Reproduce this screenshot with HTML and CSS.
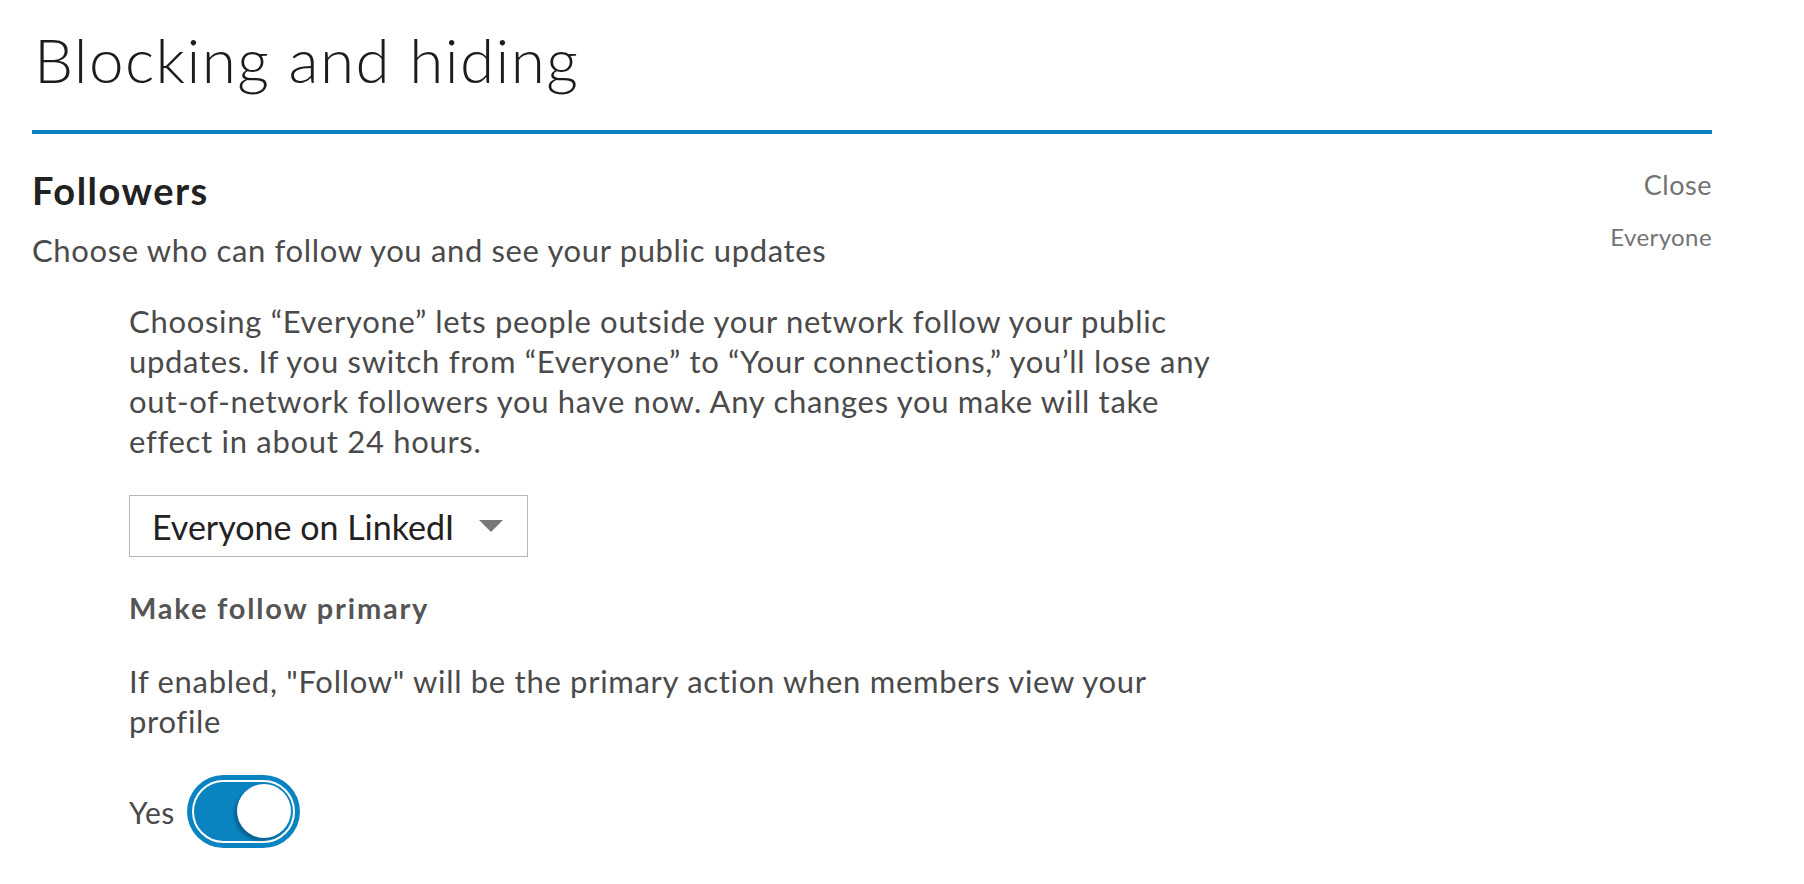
FILE: index.html
```html
<!DOCTYPE html>
<html lang="en">

<head>
    <meta charset="UTF-8">
    <meta name="viewport" content="width=device-width, initial-scale=1.0">
    <title>Blocking and hiding</title>
    <link rel="stylesheet" href="styles.css">
</head>

<body>
    <div class="page">
        <h1 class="page-title">Blocking and hiding</h1>

        <section class="setting">
            <div class="setting-head">
                <div class="setting-info">
                    <h2>Followers</h2>
                    <p class="setting-sub">Choose who can follow you and see your public updates</p>
                </div>
                <div class="setting-side">
                    <a href="#" class="close-link">Close</a>
                    <span class="current-value">Everyone</span>
                </div>
            </div>

            <div class="setting-body">
                <p class="explain">Choosing “Everyone” lets people outside your network follow your public<br>
                    updates. If you switch from “Everyone” to “Your connections,” you’ll lose any<br>
                    out-of-network followers you have now. Any changes you make will take<br>
                    effect in about 24 hours.</p>

                <div class="select">
                    <span class="select-text">Everyone on LinkedIn</span>
                    <span class="select-arrow"></span>
                </div>

                <h3>Make follow primary</h3>
                <p class="explain follow-note">If enabled, "Follow" will be the primary action when members view your<br>
                    profile</p>

                <label class="switch-row">
                    <span class="switch-label">Yes</span>
                    <span class="switch">
                        <span class="switch-track">
                            <span class="switch-knob"></span>
                        </span>
                    </span>
                </label>
            </div>
        </section>
    </div>
</body>

</html>
```

FILE: styles.css
```css
body {
    margin: 0;
    background-color: white;
    font-family: Lato, "Open Sans", sans-serif;
    color: #4a4a4a;
}

.page {
    width: 1680px;
    padding-left: 32px;
}

.page-title {
    margin: 0;
    padding: 25px 0 37px 2px;
    font-size: 62px;
    line-height: 68px;
    font-weight: 300;
    letter-spacing: 1.4px;
    color: #1c1c1c;
    border-bottom: 4px solid #0a84c1;
}

.setting-head {
    display: flex;
    justify-content: space-between;
}

.setting-info h2 {
    margin: 36px 0 0;
    font-size: 38px;
    line-height: 40px;
    font-weight: 700;
    letter-spacing: 1.5px;
    color: #222;
}

.setting-sub {
    margin: 20px 0 0;
    font-size: 31px;
    line-height: 40px;
    letter-spacing: 0.65px;
}

.setting-side {
    display: flex;
    flex-direction: column;
    align-items: flex-end;
    padding-top: 36px;
    color: #737373;
}

.close-link {
    font-size: 27px;
    line-height: 30px;
    letter-spacing: 0.5px;
    color: #737373;
    text-decoration: none;
}

.current-value {
    margin-top: 23px;
    font-size: 24px;
    line-height: 28px;
    letter-spacing: 0.4px;
}

.setting-body {
    padding-left: 97px;
}

.explain {
    margin: 31px 0 0;
    font-size: 31px;
    line-height: 40px;
    letter-spacing: 0.7px;
}

.select {
    display: flex;
    align-items: center;
    box-sizing: border-box;
    width: 399px;
    height: 62px;
    margin-top: 34px;
    padding: 0 24px 0 22px;
    border: 1px solid #b5b5b5;
    background-color: white;
}

.select-text {
    width: 302px;
    overflow: hidden;
    white-space: nowrap;
    font-size: 34px;
    color: #222;
}

.select-arrow {
    margin-left: auto;
    border-left: 12px solid transparent;
    border-right: 12px solid transparent;
    border-top: 12px solid #787878;
}

h3 {
    margin: 35px 0 0;
    font-size: 29px;
    line-height: 32px;
    font-weight: 700;
    letter-spacing: 1.8px;
    color: #555;
}

.follow-note {
    margin-top: 37px;
}

.switch-row {
    display: flex;
    align-items: center;
    gap: 12px;
    margin-top: 34px;
}

.switch-label {
    font-size: 30px;
    letter-spacing: 0.5px;
}

.switch {
    box-sizing: border-box;
    width: 113px;
    height: 73px;
    padding: 5px;
    border-radius: 37px;
    background-color: #0a84c1;
}

.switch-track {
    display: block;
    position: relative;
    box-sizing: border-box;
    height: 100%;
    border: 2px solid white;
    border-radius: 32px;
    background-color: #0a84c1;
}

.switch-knob {
    position: absolute;
    top: 2px;
    right: 2px;
    width: 54px;
    height: 54px;
    border-radius: 50%;
    background-color: white;
    box-shadow: -3px 3px 3px rgba(0, 0, 0, 0.25);
}
```
